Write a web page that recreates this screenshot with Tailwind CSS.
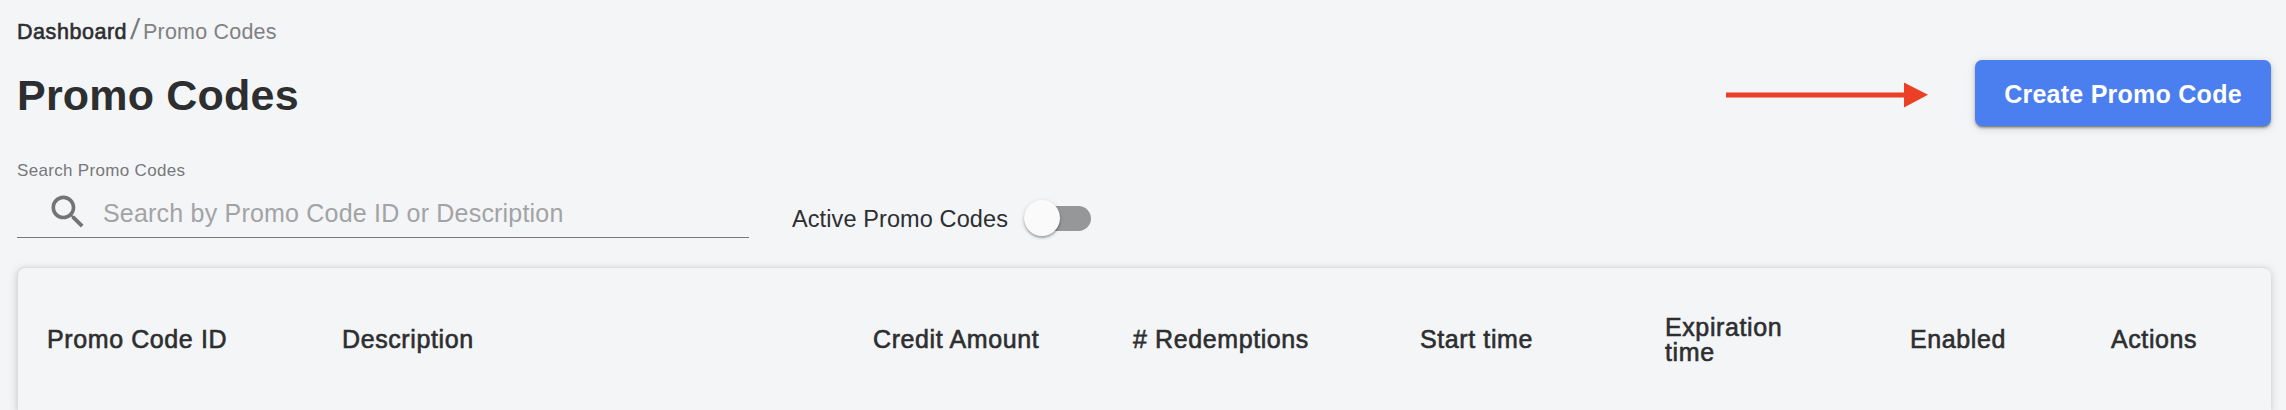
<!DOCTYPE html>
<html lang="en">
<head>
    <meta charset="UTF-8">
    <meta name="viewport" content="width=device-width, initial-scale=1.0">
    <title>Promo Codes</title>
    <script src="https://cdn.jsdelivr.net/npm/@tailwindcss/browser@4"></script>
</head>
<body class="h-[410px] overflow-hidden bg-[#f4f5f7] font-['Liberation_Sans',Arial,sans-serif] text-[#2d2e30]">
    <div class="flex h-full flex-col overflow-hidden pl-[17px] pr-[15px]">

        <nav class="mt-[16px] flex h-[30px] shrink-0 items-start text-[21.5px] leading-[32px]">
            <a class="w-[112px] tracking-[0.55px] [-webkit-text-stroke:0.6px_currentColor]">Dashboard</a>
            <span class="w-[14px] pl-[2px] text-[29px] leading-[26px] text-[#77787a]"><span class="inline-block -skew-x-6">/</span></span>
            <span class="tracking-[0.2px] text-[#808183]">Promo Codes</span>
        </nav>

        <header class="mt-[14px] flex h-[66px] shrink-0 items-center">
            <h1 class="pt-[3px] text-[43px] leading-[66px] font-bold tracking-[0.2px]">Promo Codes</h1>
            <svg class="mt-[4px] mr-[47px] ml-auto h-[26px] w-[202px]" viewBox="0 0 202 26">
                <path d="M0 10.5h178V.5l24 12.3-24 12.7v-10H0z" fill="#eb4025"/>
            </svg>
            <button class="h-[66px] w-[296px] rounded-[7px] bg-[#4b7eee] pt-[3px] text-[25px] font-bold tracking-[0.25px] whitespace-nowrap text-white shadow-[0_3px_2px_-2px_rgba(0,0,0,0.3),0_2px_3px_rgba(0,0,0,0.25),0_2px_10px_rgba(0,0,0,0.14)]">Create Promo Code</button>
        </header>

        <section class="mt-[33px] flex h-[79px] shrink-0">
            <div class="flex h-full w-[732px] flex-col border-b border-[#77787a]">
                <label class="h-[24px] text-[17px] leading-[24px] tracking-[0.32px] text-[#77787a]">Search Promo Codes</label>
                <div class="mt-[7px] flex h-[44px] items-center pl-[29px]">
                    <svg class="size-[44px] fill-[#737476]" viewBox="0 0 24 24">
                        <path d="M15.5 14h-.79l-.28-.27C15.41 12.59 16 11.11 16 9.5 16 5.91 13.09 3 9.5 3S3 5.91 3 9.5 5.91 16 9.5 16c1.61 0 3.09-.59 4.23-1.57l.27.28v.79l5 4.99L20.49 19l-4.99-5zm-6 0C7.01 14 5 11.99 5 9.5S7.01 5 9.5 5 14 7.01 14 9.5 11.99 14 9.5 14z"/>
                    </svg>
                    <span class="ml-[13px] pt-[3px] text-[25px] tracking-[0.2px] text-[#a2a3a5]">Search by Promo Code ID or Description</span>
                </div>
            </div>
            <div class="mt-[41px] ml-[43px] flex h-[36px] items-center">
                <span class="w-[232px] pt-[3px] text-[23.5px] tracking-[0.1px]">Active Promo Codes</span>
                <div class="relative flex h-[36px] w-[67px] items-center">
                    <div class="ml-[3px] h-[25px] w-[64px] rounded-full bg-[#969799]"></div>
                    <div class="absolute top-0 left-0 size-[36px] rounded-full bg-[#fafafa] shadow-[0_2px_2px_rgba(0,0,0,0.24),0_1px_4px_rgba(0,0,0,0.16)]"></div>
                </div>
            </div>
        </section>

        <main class="mt-[29px] min-h-0 flex-1 rounded-t-[8px] border-t border-l border-[#dcdde0] bg-[#f4f5f7] shadow-[0_3px_3px_-2px_rgba(0,0,0,0.2),0_2px_8px_rgba(0,0,0,0.18)]">
            <div class="grid h-[142px] grid-cols-[295px_531px_260px_287px_245px_245px_201px_120px] items-center pt-px pl-[29px] text-[25px] leading-[25px] tracking-[0.6px] whitespace-nowrap [-webkit-text-stroke:0.6px_currentColor]">
                <div>Promo Code ID</div>
                <div>Description</div>
                <div>Credit Amount</div>
                <div># Redemptions</div>
                <div>Start time</div>
                <div>Expiration<br>time</div>
                <div>Enabled</div>
                <div>Actions</div>
            </div>
        </main>
    </div>
</body>
</html>
